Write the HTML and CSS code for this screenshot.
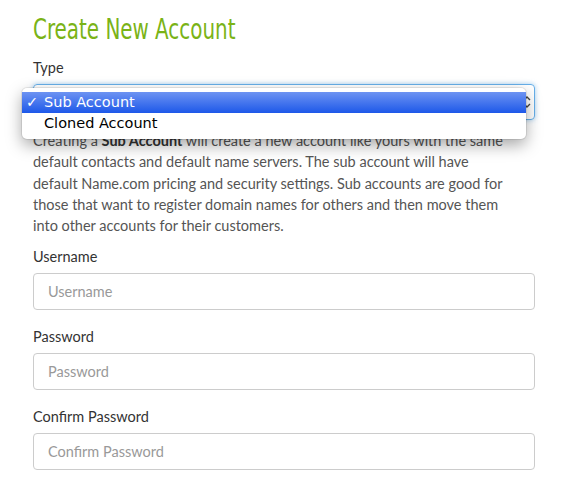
FILE: index.html
```html
<!DOCTYPE html>
<html>
<head>
<meta charset="utf-8">
<link rel="stylesheet" href="styles.css">
</head>
<body>
<div class="page">
  <h1 class="title"><span class="title-text">Create New Account</span></h1>
  <div class="field type-field">
    <div class="label">Type</div>
    <div class="select-wrap">
      <div class="select">
        <span class="select-value">Sub Account</span>
        <svg class="select-arrows" width="8" height="14" viewBox="0 0 8 14"><path d="M1 5 L4 2 L7 5" fill="none" stroke="#444" stroke-width="1.4"/><path d="M1 9 L4 12 L7 9" fill="none" stroke="#444" stroke-width="1.4"/></svg>
      </div>
      <div class="menu">
        <div class="option selected"><span class="check">✓</span>Sub Account</div>
        <div class="option"><span class="check"></span>Cloned Account</div>
      </div>
    </div>
  </div>
  <p class="desc">Creating a <b>Sub Account</b> will create a new account like yours with the same<br>default contacts and default name servers. The sub account will have<br>default Name.com pricing and security settings. Sub accounts are good for<br>those that want to register domain names for others and then move them<br>into other accounts for their customers.</p>
  <div class="field">
    <div class="label">Username</div>
    <div class="input">Username</div>
  </div>
  <div class="field">
    <div class="label">Password</div>
    <div class="input">Password</div>
  </div>
  <div class="field">
    <div class="label">Confirm Password</div>
    <div class="input">Confirm Password</div>
  </div>
</div>
</body>
</html>
```
FILE: styles.css
```css
html, body {
  margin: 0;
  padding: 0;
  background: #fff;
}
.page {
  width: 502px;
  padding: 10px 0 0 33px;
  font-family: Lato, "Open Sans", sans-serif;
  color: #333;
}
.title {
  margin: 2px 0 10px 0;
  font-family: "DejaVu Sans Condensed", "DejaVu Sans", sans-serif;
  font-stretch: condensed;
  font-weight: 400;
  font-size: 28px;
  line-height: 36px;
  color: #7ab317;
}
.title-text {
  display: inline-block;
  transform: scaleX(0.79);
  transform-origin: left center;
  white-space: nowrap;
}
.field {
  display: flex;
  flex-direction: column;
  gap: 6px;
  margin-bottom: 17px;
}
.type-field {
  margin-bottom: 0;
}
.label {
  font-size: 14.5px;
  line-height: 20px;
  color: #333;
}
.select-wrap {
  position: relative;
}
.select {
  height: 34px;
  border: 1px solid #66afe9;
  border-radius: 4px;
  box-shadow: 0 0 5px rgba(102, 175, 233, 0.6);
  display: flex;
  align-items: center;
  justify-content: space-between;
  padding: 0 3px 0 14px;
  font-size: 14px;
  color: #555;
}
.select-arrows {
  display: block;
}
.menu {
  position: absolute;
  left: -11px;
  top: 4px;
  width: 504px;
  padding: 4px 0 5px;
  background: #fff;
  border-radius: 5px;
  box-shadow: 0 6px 16px rgba(0, 0, 0, 0.35), 0 0 0 1px rgba(0, 0, 0, 0.08);
  font-family: "DejaVu Sans", sans-serif;
  font-size: 14.5px;
  color: #000;
}
.option {
  height: 21px;
  line-height: 21px;
  display: flex;
  align-items: center;
}
.option.selected {
  background: linear-gradient(#6d93f2, #1d58e9);
  color: #fff;
}
.check {
  display: inline-block;
  width: 22px;
  box-sizing: border-box;
  padding-left: 4px;
  text-align: left;
}
.desc {
  margin: 10px 0 11px 0;
  font-size: 14.5px;
  line-height: 21.3px;
  color: #555;
  white-space: nowrap;
}
.desc b {
  color: #333;
}
.input {
  height: 35px;
  border: 1px solid #ccc;
  border-radius: 4px;
  padding: 0 14px;
  display: flex;
  align-items: center;
  font-size: 14.5px;
  color: #999;
}
```
